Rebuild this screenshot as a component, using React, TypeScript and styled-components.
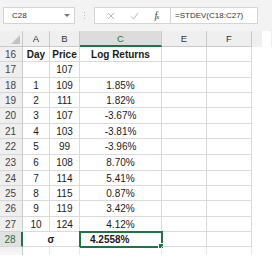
import * as React from "react";
import styled, { createGlobalStyle, css } from "styled-components";

const GREEN = "#217346";
const GRID = "#dadada";

const GlobalStyle = createGlobalStyle`
  body {
    margin: 0;
    background: #ffffff;
    font-family: "Liberation Sans", Arial, sans-serif;
  }
`;

const Page = styled.div`
  width: 272px;
  height: 265px;
  overflow: hidden;
  background: #ffffff;
`;

const FormulaBar = styled.div`
  display: flex;
  align-items: center;
  height: 31px;
  padding: 0 0 0 3px;
  box-sizing: border-box;
  background: #f3f3f3;
`;

const NameBox = styled.div`
  display: flex;
  align-items: center;
  width: 72px;
  height: 17px;
  padding: 0 4px 0 8px;
  box-sizing: border-box;
  background: #ffffff;
  border: 1px solid #d4d4d4;
  font-size: 8px;
  color: #333;
`;

const Caret = styled.span`
  margin-left: auto;
  width: 0;
  height: 0;
  border-left: 3px solid transparent;
  border-right: 3px solid transparent;
  border-top: 3px solid #777;
`;

const Grip = styled.div`
  display: flex;
  flex-direction: column;
  gap: 2px;
  margin: 0 9px 0 9px;
  & > span {
    width: 1px;
    height: 1px;
    background: #b8b8b8;
  }
`;

const FxGroup = styled.div`
  display: flex;
  align-items: center;
  justify-content: space-around;
  width: 76px;
  height: 17px;
  box-sizing: border-box;
  background: #ffffff;
  border: 1px solid #d4d4d4;
  border-right: none;
  padding: 0 4px;
`;

const Fx = styled.span`
  font-family: "Liberation Serif", serif;
  font-style: italic;
  font-size: 10px;
  color: #444;
  letter-spacing: -1px;
  & > small {
    font-size: 7px;
  }
`;

const FormulaInput = styled.div`
  display: flex;
  align-items: center;
  width: 88px;
  height: 17px;
  padding-left: 4px;
  box-sizing: border-box;
  background: #ffffff;
  border: 1px solid #d4d4d4;
  font-size: 8px;
  color: #333;
  white-space: nowrap;
`;

const COLS = "23px 27px 30px 82px 45px 45px 20px";

const HeaderRow = styled.div`
  display: grid;
  grid-template-columns: ${COLS};
  height: 16px;
`;

const ColHead = styled.div<{ $selected?: boolean; $blank?: boolean }>`
  display: flex;
  align-items: center;
  justify-content: center;
  box-sizing: border-box;
  background: ${(p) => (p.$selected ? "#dcdcdc" : "#efefef")};
  border-right: 1px solid ${(p) => (p.$blank ? "transparent" : "#c9c9c9")};
  border-bottom: ${(p) => (p.$selected ? `2px solid ${GREEN}` : p.$blank ? "none" : "1px solid #c9c9c9")};
  font-size: 9.5px;
  color: ${(p) => (p.$selected ? GREEN : "#333")};
  ${(p) =>
    p.$blank &&
    css`
      background: linear-gradient(to right, #efefef 10px, #ffffff 10px);
    `}
`;

const Corner = styled(ColHead)`
  align-items: flex-end;
  justify-content: flex-end;
  padding: 0 2px 2px 0;
`;

const Triangle = styled.span`
  width: 0;
  height: 0;
  border-left: 9px solid transparent;
  border-bottom: 9px solid #c2c2c2;
`;

const Row = styled.div<{ $h: number }>`
  display: grid;
  grid-template-columns: ${COLS};
  height: ${(p) => p.$h}px;
`;

const RowHead = styled.div<{ $selected?: boolean }>`
  display: flex;
  align-items: center;
  justify-content: center;
  padding-right: 1px;
  box-sizing: border-box;
  background: ${(p) => (p.$selected ? "#e1e1e1" : "#efefef")};
  border-right: ${(p) => (p.$selected ? `2px solid ${GREEN}` : "1px solid #c9c9c9")};
  border-bottom: 1px solid #d6d6d6;
  font-size: 10px;
  color: ${(p) => (p.$selected ? GREEN : "#444")};
`;

const Cell = styled.div<{ $bold?: boolean; $span?: number; $align?: string; $selected?: boolean; $faded?: boolean }>`
  position: relative;
  display: flex;
  align-items: center;
  justify-content: ${(p) => p.$align || "center"};
  grid-column: span ${(p) => p.$span || 1};
  box-sizing: border-box;
  border-right: 1px solid ${(p) => (p.$faded ? "#e8e8e8" : GRID)};
  border-bottom: ${(p) => (p.$faded ? "none" : `1px solid ${GRID}`)};
  font-size: 10px;
  font-weight: ${(p) => (p.$bold ? 700 : 400)};
  color: #1a1a1a;
  white-space: nowrap;
  ${(p) =>
    p.$selected &&
    css`
      padding-left: 10px;
      outline: 2px solid ${GREEN};
      outline-offset: -1px;
      &::after {
        content: "";
        position: absolute;
        right: -3px;
        bottom: -3px;
        width: 4px;
        height: 4px;
        background: ${GREEN};
        border: 1px solid #ffffff;
      }
    `}
`;

const Edge = styled.div`
  background: #ffffff;
`;

const FadedHead = styled(RowHead)`
  border-bottom: none;
  background: linear-gradient(to bottom, #efefef, #f8f8f8);
`;

const CloseIcon = () => (
  <svg width="8" height="8" viewBox="0 0 8 8">
    <path d="M1 1L7 7M7 1L1 7" stroke="#b5b5b5" strokeWidth="1" fill="none" />
  </svg>
);

const CheckIcon = () => (
  <svg width="9" height="8" viewBox="0 0 9 8">
    <path d="M1 4.5L3.5 7L8 1" stroke="#b5b5b5" strokeWidth="1" fill="none" />
  </svg>
);

const data: [string, string, string][] = [
  ["", "107", ""],
  ["1", "109", "1.85%"],
  ["2", "111", "1.82%"],
  ["3", "107", "-3.67%"],
  ["4", "103", "-3.81%"],
  ["5", "99", "-3.96%"],
  ["6", "108", "8.70%"],
  ["7", "114", "5.41%"],
  ["8", "115", "0.87%"],
  ["9", "119", "3.42%"],
  ["10", "124", "4.12%"],
];

const heights = [15, 16, 15, 15, 16, 15, 16, 16, 15, 15, 16, 15, 15];

export default function App() {
  return (
    <Page>
      <GlobalStyle />
      <FormulaBar>
        <NameBox>
          C28
          <Caret />
        </NameBox>
        <Grip>
          <span />
          <span />
          <span />
        </Grip>
        <FxGroup>
          <CloseIcon />
          <CheckIcon />
          <Fx>
            f<small>x</small>
          </Fx>
        </FxGroup>
        <FormulaInput>=STDEV(C18:C27)</FormulaInput>
      </FormulaBar>

      <HeaderRow>
        <Corner>
          <Triangle />
        </Corner>
        <ColHead>A</ColHead>
        <ColHead>B</ColHead>
        <ColHead $selected>C</ColHead>
        <ColHead>E</ColHead>
        <ColHead>F</ColHead>
        <ColHead $blank />
      </HeaderRow>

      <Row $h={heights[0]}>
        <RowHead>16</RowHead>
        <Cell $bold>Day</Cell>
        <Cell $bold>Price</Cell>
        <Cell $bold>Log Returns</Cell>
        <Cell />
        <Cell />
        <Edge />
      </Row>

      {data.map(([day, price, ret], i) => (
        <Row key={i} $h={heights[i + 1]}>
          <RowHead>{17 + i}</RowHead>
          <Cell>{day}</Cell>
          <Cell>{price}</Cell>
          <Cell>{ret}</Cell>
          <Cell />
          <Cell />
          <Edge />
        </Row>
      ))}

      <Row $h={heights[12]}>
        <RowHead $selected>28</RowHead>
        <Cell $bold $span={2}>
          σ
        </Cell>
        <Cell $bold $selected $align="flex-start">
          4.2558%
        </Cell>
        <Cell />
        <Cell />
        <Edge />
      </Row>

      <Row $h={8}>
        <FadedHead />
        <Cell $faded />
        <Cell $faded />
        <Cell $faded />
        <Cell $faded />
        <Cell $faded />
        <Edge />
      </Row>
    </Page>
  );
}
